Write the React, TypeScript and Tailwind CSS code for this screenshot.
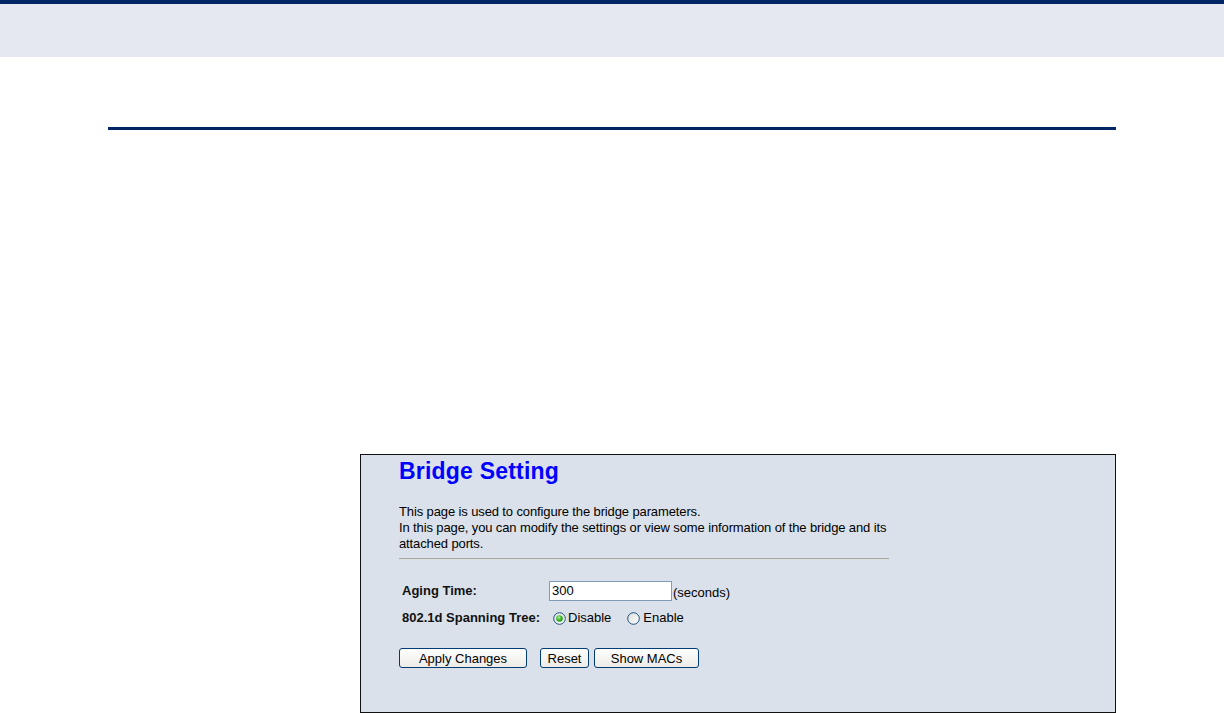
import React from "react";

function Radio({ checked }: { checked: boolean }) {
  return (
    <svg width="13" height="13" viewBox="0 0 13 13" className="shrink-0">
      <defs>
        <linearGradient id={checked ? "rg1" : "rg2"} x1="0" y1="0" x2="1" y2="1">
          <stop offset="0" stopColor="#dcdcd7" />
          <stop offset="1" stopColor="#ffffff" />
        </linearGradient>
        <radialGradient id="gdot" cx="0.4" cy="0.35" r="0.7">
          <stop offset="0" stopColor="#b8f0a8" />
          <stop offset="0.5" stopColor="#3fbf2a" />
          <stop offset="1" stopColor="#1f8a10" />
        </radialGradient>
      </defs>
      <circle cx="6.5" cy="6.5" r="5.8" fill={`url(#${checked ? "rg1" : "rg2"})`} stroke="#1c5180" strokeWidth="1" />
      {checked && <circle cx="6.5" cy="6.5" r="3.3" fill="url(#gdot)" />}
    </svg>
  );
}

function Btn({ children, w }: { children: React.ReactNode; w: string }) {
  return (
    <button
      className={`${w} h-[20px] rounded-[3px] border border-[#003c74] bg-gradient-to-b from-[#ffffff] to-[#ecebe6] text-[13px] text-black leading-none flex items-center justify-center`}
    >
      {children}
    </button>
  );
}

export default function App() {
  return (
    <div className="w-[1224px] h-[713px] bg-white overflow-hidden" style={{ fontFamily: '"Liberation Sans", Arial, sans-serif' }}>
      <div className="h-[4px] bg-[#002563]" />
      <div className="h-[53px] bg-[#e5e8f1]" />
      <div className="mt-[70px] ml-[108px] w-[1008px] h-[3px] bg-[#002563]" />
      <div className="mt-[324px] ml-[360px] w-[756px] h-[259px] border border-[#111] bg-[#dae1ea] pl-[38px] pt-[3px]">
        <div className="text-[23px] font-bold text-[#0000ff] leading-[26px] tracking-[0.2px]">Bridge Setting</div>
        <div className="mt-[20px] w-[495px] text-[13px] leading-[16px] tracking-[-0.12px] text-black">
          This page is used to configure the bridge parameters.
          <br />
          In this page, you can modify the settings or view some information of the bridge and its attached ports.
        </div>
        <div className="mt-[6px] w-[490px] h-[1px] bg-[#aca899]" />
        <div className="mt-[22px] pl-[3px] flex items-center h-[20px] text-[13px]">
          <div className="w-[147px] font-bold text-[#111]">Aging Time:</div>
          <div className="w-[123px] h-[20px] border border-[#7f9db9] bg-white px-[2px] flex items-center text-[13px]">300</div>
          <span className="ml-[1px] mt-[4px]">(seconds)</span>
        </div>
        <div className="mt-[8px] pl-[3px] flex items-center h-[18px] text-[13px]">
          <div className="w-[151px] font-bold text-[#111]">802.1d Spanning Tree:</div>
          <Radio checked />
          <span className="ml-[2px]">Disable</span>
          <span className="ml-[16px]"><Radio checked={false} /></span>
          <span className="ml-[3px]">Enable</span>
        </div>
        <div className="mt-[21px] flex items-center">
          <Btn w="w-[128px]">Apply Changes</Btn>
          <div className="w-[13px]" />
          <Btn w="w-[49px]">Reset</Btn>
          <div className="w-[5px]" />
          <Btn w="w-[105px]">Show MACs</Btn>
        </div>
      </div>
    </div>
  );
}
